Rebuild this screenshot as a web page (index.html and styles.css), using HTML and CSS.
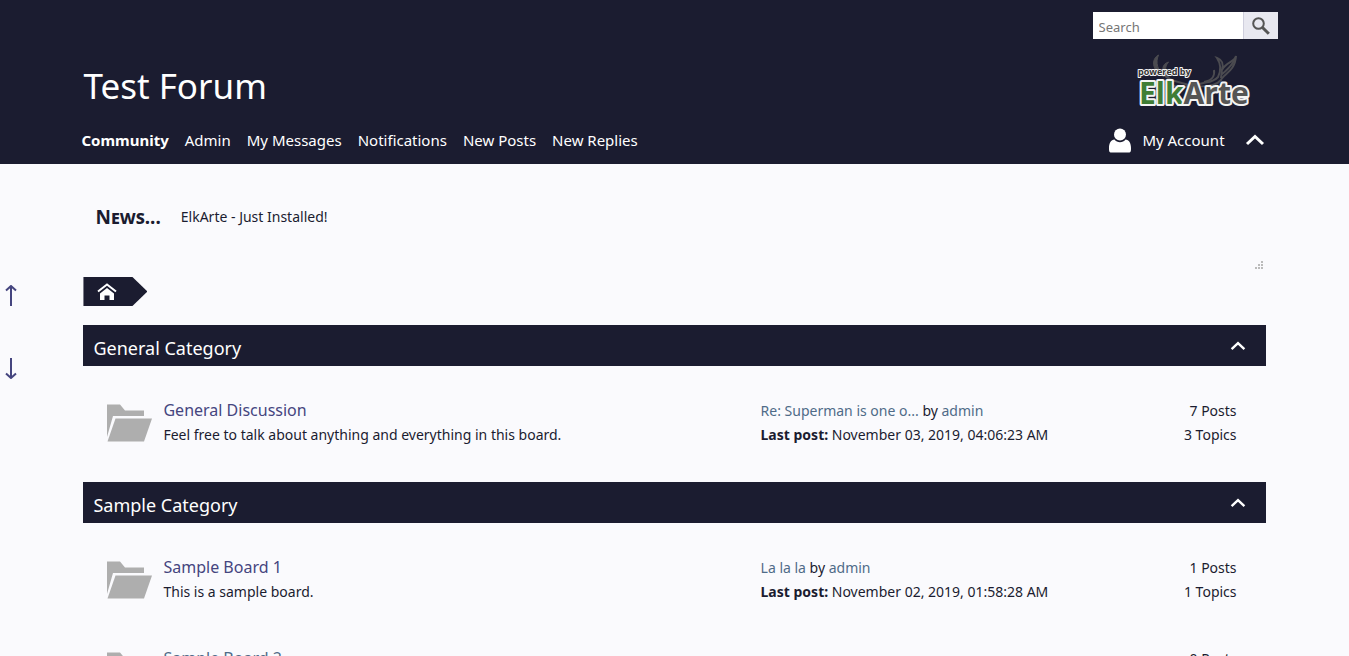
FILE: index.html
```html
<!DOCTYPE html>
<html lang="en">
<head>
<meta charset="utf-8">
<title>Test Forum - Index</title>
<meta name="viewport" content="width=device-width, initial-scale=1">
<link rel="stylesheet" href="styles.css">
</head>
<body>
<svg class="symbols" aria-hidden="true">
  <symbol id="folder" viewBox="0 0 46 38">
    <path d="M0 .5H13L18 6.500H37V12H6L0 33Z"/>
    <path d="M8.500 14.500H45L37 37.500H.5Z"/>
  </symbol>
  <symbol id="chevron" viewBox="0 0 20 12">
    <path d="M2 10L10 2.500L18 10"/>
  </symbol>
</svg>
<header class="site-header">
  <div class="wrapper">
    <form class="search" role="search">
      <input class="search-input" type="search" placeholder="Search" aria-label="Search">
      <button class="search-button" type="button" aria-label="Search">
        <svg class="search-icon" viewBox="0 0 18 18"><circle cx="6.500" cy="6.500" r="5.300"/><path d="M10.500 10.500L16.800 16.800"/></svg>
      </button>
    </form>
    <div class="brand">
      <h1 class="site-title"><a href="#">Test Forum</a></h1>
      <svg class="logo" viewBox="0 0 114 54" role="img" aria-label="powered by ElkArte">
        <g class="antlers">
          <path class="tine" d="M20.500 0C15 3 13.500 10 19 17L26 22C20 15 17 8 20.500 0Z"/>
          <path class="tine" d="M30.500 7C24 9 23 15 28 22L32 24C27 18 26 12 30.500 7Z"/>
          <path d="M26 20C34 28 43 26 52 31C44 33 34 32 29 27"/>
          <path d="M98 1C97 7 88 7 84 15C86 8 84 5 79 3C83 9 83 16 80 22C74 29 65 26 57 31C67 32 77 32 83 25C85 19 97 17 98 1Z"/>
          <path d="M76 15C77 21 75 25 66 27M84 14L83 23M83 20C88 16 93 11 96 6"/>
        </g>
        <text class="logo-small" x="0" y="20">powered by</text>
        <text class="logo-name" x="1" y="49"><tspan class="logo-green">Elk</tspan><tspan class="logo-gray">Arte</tspan></text>
      </svg>
    </div>
    <nav class="main-nav">
      <ul class="menu">
        <li><a class="active" href="#">Community</a></li>
        <li><a href="#">Admin</a></li>
        <li><a href="#">My Messages</a></li>
        <li><a href="#">Notifications</a></li>
        <li><a href="#">New Posts</a></li>
        <li><a href="#">New Replies</a></li>
      </ul>
      <div class="account">
        <a class="account-link" href="#">
          <svg class="user-icon" viewBox="0 0 22 25"><circle cx="11" cy="6.500" r="6"/><path d="M1.500 24.500C0 24 0 22.500 0 20C0 15 2 12 5.500 11.500C8 15 14 15 16.500 11.500C20 12 22 15 22 20C22 22.500 22 24 20.500 24.500Z"/></svg>
          My Account
        </a>
        <button class="toggle" type="button" aria-label="Collapse header"><svg class="chevron"><use href="#chevron"/></svg></button>
      </div>
    </nav>
  </div>
</header>
<nav class="jump" aria-label="Jump">
  <a href="#top" aria-label="Go up"><svg class="jump-icon" viewBox="0 0 12 22"><path d="M6 21V1.500M1 5.500L6 1L11 5.500"/></svg></a>
  <a href="#bottom" aria-label="Go down"><svg class="jump-icon" viewBox="0 0 12 22"><path d="M6 1V20.500M1 16.500L6 21L11 16.500"/></svg></a>
</nav>
<main class="wrapper content">
  <section class="news">
    <h2 class="news-title">News...</h2>
    <p class="news-text">ElkArte - Just Installed!</p>
    <svg class="grip" viewBox="0 0 8 8" aria-hidden="true"><path d="M6 0h2v2H6zM3 3h2v2H3zM6 3h2v2H6zM0 6h2v2H0zM3 6h2v2H3zM6 6h2v2H6z"/></svg>
  </section>
  <nav class="breadcrumb" aria-label="Breadcrumb">
    <a class="crumb" href="#" aria-label="Home"><svg class="home-icon" viewBox="0 0 20 18"><path class="roof" d="M1 8.500L10 1.500L19 8.500"/><path class="house" d="M3 10.500L10 5L17 10.500V17H12.500V12.500H7.500V17H3Z"/></svg></a>
  </nav>
  <section class="category">
    <header class="category-header">
      <h2>General Category</h2>
      <button class="toggle" type="button" aria-label="Collapse General Category"><svg class="chevron small"><use href="#chevron"/></svg></button>
    </header>
    <ul class="boards">
      <li class="board">
        <svg class="folder"><use href="#folder"/></svg>
        <div class="info"><h3><a href="#">General Discussion</a></h3><p>Feel free to talk about anything and everything in this board.</p></div>
        <div class="latest"><p><a href="#">Re: Superman is one o...</a> by <a href="#">admin</a></p><p><strong>Last post:</strong> November 03, 2019, 04:06:23 AM</p></div>
        <div class="stats"><p>7 Posts</p><p>3 Topics</p></div>
      </li>
    </ul>
  </section>
  <section class="category">
    <header class="category-header">
      <h2>Sample Category</h2>
      <button class="toggle" type="button" aria-label="Collapse Sample Category"><svg class="chevron small"><use href="#chevron"/></svg></button>
    </header>
    <ul class="boards">
      <li class="board">
        <svg class="folder"><use href="#folder"/></svg>
        <div class="info"><h3><a href="#">Sample Board 1</a></h3><p>This is a sample board.</p></div>
        <div class="latest"><p><a href="#">La la la</a> by <a href="#">admin</a></p><p><strong>Last post:</strong> November 02, 2019, 01:58:28 AM</p></div>
        <div class="stats"><p>1 Posts</p><p>1 Topics</p></div>
      </li>
      <li class="board">
        <svg class="folder"><use href="#folder"/></svg>
        <div class="info"><h3><a class="visited" href="#">Sample Board 2</a></h3></div>
        <div class="latest"></div>
        <div class="stats"><p>0 Posts</p><p>0 Topics</p></div>
      </li>
    </ul>
  </section>
</main>
</body>
</html>
```
FILE: styles.css
```css
:root {
  --navy: #1b1c30;
  --page: #fafafd;
  --link: #45457f;
  --link-soft: #4f6b88;
}
* { box-sizing: border-box; }
body {
  margin: 0;
  background: var(--page);
  color: var(--navy);
  font-family: "Segoe UI", "Noto Sans", "Open Sans", sans-serif;
  font-size: 14px;
  line-height: 24px;
}
h1, h2, h3, p, ul { margin: 0; padding: 0; font-weight: 400; }
ul { list-style: none; }
a { color: var(--link); text-decoration: none; }
button { border: 0; padding: 0; background: none; cursor: pointer; }
svg { display: block; flex: none; }
.symbols { position: absolute; width: 0; height: 0; }
.wrapper { width: 90%; margin: 0 auto; padding: 0 16px; }

.site-header { background: var(--navy); color: #fff; padding: 12px 0 8px; }
.site-header a { color: #fff; }
.search { display: flex; justify-content: flex-end; height: 27px; margin-right: -12px; }
.search-input {
  width: 150px;
  border: 0;
  padding: 3px 6px 0;
  background: #fff;
  color: #555;
  font: 13px "Segoe UI", "Noto Sans", sans-serif;
  appearance: none;
}
.search-input::placeholder { color: #767676; }
.search-button {
  display: grid;
  place-items: center;
  width: 35px;
  border-left: 1px solid #cfcfdd;
  background: #e8e8f0;
}
.search-icon { width: 18px; height: 18px; fill: none; stroke: #555; stroke-width: 2; }
.search-icon path { stroke-width: 3; }
.brand { display: flex; justify-content: space-between; height: 85px; padding: 16px 14px 0 0; }
.site-title { font-size: 35px; line-height: 62px; }
.logo { width: 114px; height: 54px; overflow: visible; }
.antlers { fill: none; stroke: #4b4b50; stroke-width: 2; }
.antlers .tine { fill: #4b4b50; stroke-width: 1; }
.logo text { font-family: "Open Sans", "Noto Sans", sans-serif; font-weight: 700; paint-order: stroke; stroke: #f4f4f4; stroke-linejoin: round; }
.logo-small { font-size: 9px; fill: #333; stroke-width: 2; }
.logo .logo-name { font-size: 30px; stroke-width: 4; }
.logo-green { fill: #3f7d35; }
.logo-gray { fill: #555; }
.main-nav { display: flex; justify-content: space-between; align-items: center; height: 32px; }
.menu { display: flex; gap: 16px; margin-left: -2px; font-size: 15px; }
.active { font-weight: 700; }
.account { display: flex; align-items: center; gap: 20px; margin-right: 1px; font-size: 15px; }
.account-link { display: flex; align-items: center; gap: 11px; }
.user-icon { width: 22px; height: 25px; fill: #fff; }
.chevron { width: 20px; height: 12px; fill: none; stroke: #fff; stroke-width: 3; }
.chevron.small { width: 16px; height: 10px; }

.jump { position: fixed; left: 5px; top: 285px; display: grid; gap: 50px; }
.jump-icon { width: 12px; height: 22px; fill: none; stroke: var(--link); stroke-width: 2; }

.news { display: flex; gap: 20px; height: 113px; padding: 41px 3px 8px 12px; }
.news-title { font-size: 19px; font-weight: 700; font-variant: small-caps; }
.grip { width: 8px; height: 8px; margin-left: auto; align-self: flex-end; fill: #bbb; }
.crumb {
  display: flex;
  align-items: center;
  width: 64px;
  height: 29px;
  padding-left: 14px;
  background: var(--navy);
  clip-path: polygon(0 0, 49px 0, 100% 50%, 49px 100%, 0 100%);
}
.home-icon { width: 20px; height: 18px; }
.roof { fill: none; stroke: #fff; stroke-width: 2; }
.house { fill: #fff; }
.breadcrumb { margin-bottom: 19px; }

.category-header {
  display: flex;
  justify-content: space-between;
  align-items: center;
  height: 41px;
  padding: 0 20px 0 10px;
  background: var(--navy);
  color: #fff;
}
.category-header h2 { font-size: 18px; padding-top: 5px; }
.boards { padding: 11px 0 14px; }
.board {
  display: grid;
  grid-template-columns: 46px 1fr 330px 146px;
  align-items: center;
  min-height: 91px;
  padding: 0 29px 0 24px;
}
.folder { width: 46px; height: 38px; fill: #aeaeae; }
.info { align-self: start; padding: 21px 0 0 10px; }
.info h3 { font-size: 16px; line-height: 25px; }
.visited { color: var(--link-soft); }
.latest, .stats { align-self: start; padding-top: 22px; }
.latest a { color: var(--link-soft); }
.latest strong { font-weight: 700; }
.stats { text-align: right; }
```
